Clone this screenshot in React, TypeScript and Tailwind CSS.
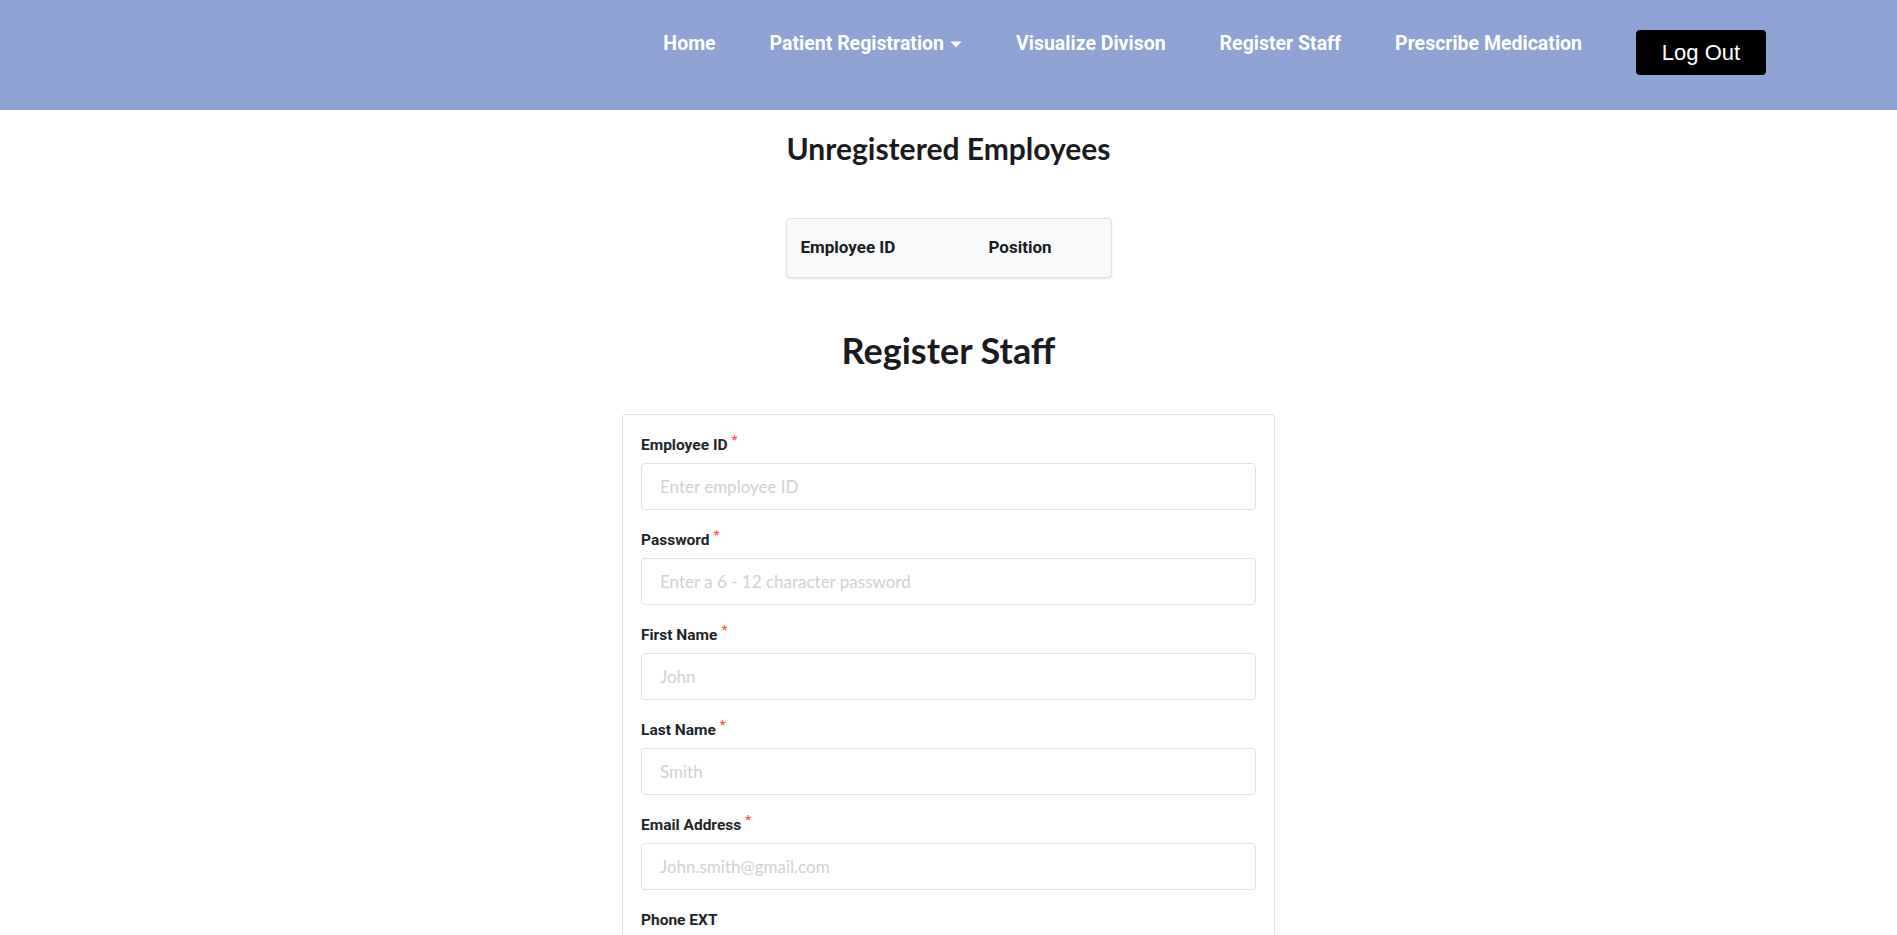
import { useState } from "react";

const navLinks = ["Home", "Patient Registration", "Visualize Divison", "Register Staff", "Prescribe Medication"];

const fields = [
  { label: "Employee ID", placeholder: "Enter employee ID", required: true },
  { label: "Password", placeholder: "Enter a 6 - 12 character password", required: true },
  { label: "First Name", placeholder: "John", required: true },
  { label: "Last Name", placeholder: "Smith", required: true },
  { label: "Email Address", placeholder: "John.smith@gmail.com", required: true },
  { label: "Phone EXT", placeholder: "1234", required: false },
  { label: "Position", placeholder: "Select a position", required: true },
];

function Caret() {
  return (
    <svg width="12" height="7" viewBox="0 0 12 7" className="ml-[6px] mt-[1px]">
      <path d="M0.5 0.5 L11.5 0.5 L6 6.5 Z" fill="white" />
    </svg>
  );
}

export default function App() {
  const [values, setValues] = useState<Record<string, string>>({});

  return (
    <div className="h-screen overflow-hidden bg-white text-[#212529]">
      {/* Header */}
      <header className="h-[110px] bg-[#8ea2d4] flex items-start justify-end pt-[30px] pr-[131px] gap-[54px]">
        {navLinks.map((link) => (
          <a
            key={link}
            href="#"
            className="mt-[2px] flex items-center leading-[24px] text-[19.5px] font-bold text-white"
            style={{ fontFamily: "Roboto, 'Liberation Sans', sans-serif" }}
          >
            {link}
            {link === "Patient Registration" && <Caret />}
          </a>
        ))}
        <button
          className="h-[45px] w-[130px] rounded-[4px] bg-black text-white text-[22px]"
          style={{ fontFamily: "'Liberation Sans', Arial, sans-serif" }}
        >
          Log Out
        </button>
      </header>

      <main className="flex flex-col items-center" style={{ fontFamily: "Lato, 'Noto Sans', sans-serif" }}>
        <h2 className="pt-[20px] text-[30px] leading-[36px] font-bold text-[#1a1b1e]">Unregistered Employees</h2>

        {/* Unregistered table */}
        <div className="mt-[52px] w-[326px] rounded-[4px] border border-[#dee2e6] bg-[#f8f9fa] shadow-[0_1px_2px_rgba(0,0,0,0.12)]">
          <table className="w-full" style={{ fontFamily: "Roboto, 'Liberation Sans', sans-serif" }}>
            <thead>
              <tr className="h-[58px] text-left text-[17px] font-bold text-[#1a1b1e]">
                <th className="w-[187px] pl-[14px]">Employee ID</th>
                <th className="pl-[15px]">Position</th>
              </tr>
            </thead>
            <tbody></tbody>
          </table>
        </div>

        <h1 className="mt-[51px] text-[36px] leading-[43px] font-bold text-[#1a1b1e]">Register Staff</h1>

        {/* Form card */}
        <form className="mt-[42px] w-[653px] rounded-[4px] border border-[#dee2e6] bg-white px-[18px] pt-[19px] pb-6">
          {fields.map((f) => (
            <div key={f.label} className="mb-[19px]">
              <label
                className="flex items-start h-[22px] mb-[7px] text-[15.5px] leading-[22px] font-bold text-[#212529]"
                style={{ fontFamily: "Roboto, 'Liberation Sans', sans-serif" }}
              >
                {f.label}
                {f.required && <span className="ml-[4px] -mt-[5px] text-[13px] text-[#fa5252]">*</span>}
              </label>
              <input
                type={f.label === "Password" ? "password" : "text"}
                value={values[f.label] ?? ""}
                onChange={(e) => setValues({ ...values, [f.label]: e.target.value })}
                placeholder={f.placeholder}
                className="block w-full h-[47px] rounded-[4px] border border-[#dee2e6] px-[18px] text-[17px] text-[#212529] placeholder-[#cfd2d6] outline-none"
              />
            </div>
          ))}
          <button type="button" className="h-[42px] w-full rounded-[4px] bg-[#8ea2d4] text-white font-bold">
            Register
          </button>
        </form>
      </main>
    </div>
  );
}
